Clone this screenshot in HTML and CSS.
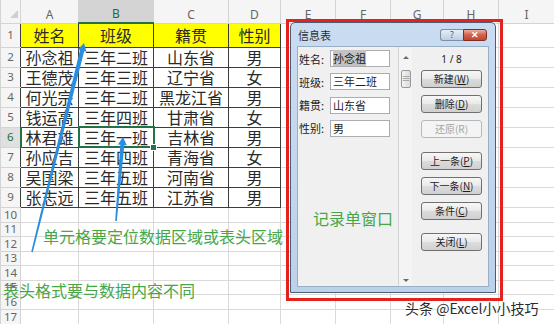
FILE: index.html
```html
<!DOCTYPE html>
<html lang="zh-CN">
<head>
    <meta charset="UTF-8">
    <meta name="viewport" content="width=device-width, initial-scale=1.0">
    <title>记录单</title>
    <link rel="stylesheet" href="styles.css">
</head>
<body>
<div id="tela">

    <!-- Planilha -->
    <table class="planilha">
        <colgroup>
            <col class="c-rh"><col class="c-a"><col class="c-b"><col class="c-c"><col class="c-d">
            <col class="c-e"><col class="c-f"><col class="c-g"><col class="c-h"><col class="c-i">
        </colgroup>
        <tr class="r-cab">
            <th class="canto"><span class="tri"></span></th>
            <th>A</th><th class="sel">B</th><th>C</th><th>D</th><th>E</th><th>F</th><th>G</th><th>H</th><th>I</th>
        </tr>
        <tr class="r-tit">
            <th class="rh">1</th>
            <td class="d amarelo">姓名</td><td class="d amarelo">班级</td><td class="d amarelo">籍贯</td><td class="d amarelo">性别</td>
            <td></td><td></td><td></td><td></td><td></td>
        </tr>
        <tr class="r-dado">
            <th class="rh">2</th>
            <td class="d">孙念祖</td><td class="d">三年二班</td><td class="d">山东省</td><td class="d">男</td>
            <td></td><td></td><td></td><td></td><td></td>
        </tr>
        <tr class="r-dado">
            <th class="rh">3</th>
            <td class="d">王德茂</td><td class="d">三年三班</td><td class="d">辽宁省</td><td class="d">女</td>
            <td></td><td></td><td></td><td></td><td></td>
        </tr>
        <tr class="r-dado">
            <th class="rh">4</th>
            <td class="d">何光宗</td><td class="d">三年二班</td><td class="d">黑龙江省</td><td class="d">男</td>
            <td></td><td></td><td></td><td></td><td></td>
        </tr>
        <tr class="r-dado">
            <th class="rh">5</th>
            <td class="d">钱运高</td><td class="d">三年四班</td><td class="d">甘肃省</td><td class="d">女</td>
            <td></td><td></td><td></td><td></td><td></td>
        </tr>
        <tr class="r-dado">
            <th class="rh sel">6</th>
            <td class="d">林君雄</td><td class="d ativa">三年一班</td><td class="d">吉林省</td><td class="d">男</td>
            <td></td><td></td><td></td><td></td><td></td>
        </tr>
        <tr class="r-dado">
            <th class="rh">7</th>
            <td class="d">孙应吉</td><td class="d">三年四班</td><td class="d">青海省</td><td class="d">女</td>
            <td></td><td></td><td></td><td></td><td></td>
        </tr>
        <tr class="r-dado">
            <th class="rh">8</th>
            <td class="d">吴国梁</td><td class="d">三年五班</td><td class="d">河南省</td><td class="d">男</td>
            <td></td><td></td><td></td><td></td><td></td>
        </tr>
        <tr class="r-dado">
            <th class="rh">9</th>
            <td class="d">张志远</td><td class="d">三年五班</td><td class="d">江苏省</td><td class="d">男</td>
            <td></td><td></td><td></td><td></td><td></td>
        </tr>
        <tr class="r-vazia"><th class="rh">10</th><td></td><td></td><td></td><td></td><td></td><td></td><td></td><td></td><td></td></tr>
        <tr class="r-vazia2"><th class="rh">11</th><td></td><td></td><td></td><td></td><td></td><td></td><td></td><td></td><td></td></tr>
        <tr class="r-vazia"><th class="rh">12</th><td></td><td></td><td></td><td></td><td></td><td></td><td></td><td></td><td></td></tr>
        <tr class="r-vazia2"><th class="rh">13</th><td></td><td></td><td></td><td></td><td></td><td></td><td></td><td></td><td></td></tr>
        <tr class="r-vazia"><th class="rh">14</th><td></td><td></td><td></td><td></td><td></td><td></td><td></td><td></td><td></td></tr>
        <tr class="r-vazia2"><th class="rh">15</th><td></td><td></td><td></td><td></td><td></td><td></td><td></td><td></td><td></td></tr>
        <tr class="r-vazia"><th class="rh">16</th><td></td><td></td><td></td><td></td><td></td><td></td><td></td><td></td><td></td></tr>
        <tr class="r-vazia"><th class="rh">17</th><td></td><td></td><td></td><td></td><td></td><td></td><td></td><td></td><td></td></tr>
    </table>

    <!-- alça de preenchimento da célula ativa -->
    <span class="alca"></span>

    <!-- Setas -->
    <svg class="setas" width="554" height="324" viewBox="0 0 554 324">
        <polygon points="84,43 86.44,51.85 84.20,51.29 32.78,252.19 31.22,251.81 79.94,50.23 77.70,49.67"/>
        <polygon points="123,137 126.82,145.34 124.33,145.14 116.80,221.07 115.20,220.93 120.35,144.80 117.86,144.60"/>
    </svg>

    <div class="nota nota-celula">单元格要定位数据区域或表头区域</div>
    <div class="nota nota-cab">表头格式要与数据内容不同</div>

    <!-- Janela do formulário -->
    <div class="janela">
        <div class="barra">
            <span class="titulo">信息表</span>
            <span class="bt-ajuda">?</span>
            <span class="bt-fechar">✕</span>
        </div>
        <div class="cliente">
            <div class="campos">
                <div class="campo"><label>姓名:</label><span class="caixa"><span class="selecao">孙念祖</span></span></div>
                <div class="campo"><label>班级:</label><span class="caixa">三年二班</span></div>
                <div class="campo"><label>籍贯:</label><span class="caixa">山东省</span></div>
                <div class="campo"><label>性别:</label><span class="caixa">男</span></div>
            </div>
            <div class="rolagem">
                <span class="seta-cima"></span>
                <span class="polegar">≡</span>
                <span class="seta-baixo"></span>
            </div>
            <div class="acoes">
                <div class="contador">1 / 8</div>
                <button>新建(<u>W</u>)</button>
                <button>删除(<u>D</u>)</button>
                <button class="inativo">还原(R)</button>
                <button class="grupo">上一条(<u>P</u>)</button>
                <button>下一条(<u>N</u>)</button>
                <button>条件(<u>C</u>)</button>
                <button class="grupo2">关闭(<u>L</u>)</button>
            </div>
        </div>
    </div>

    <div class="nota nota-janela">记录单窗口</div>
    <div class="moldura"></div>

    <div class="marca">头条 @Excel小小技巧</div>
</div>
</body>
</html>
```

FILE: styles.css
```css
body{margin:0;background:#fff;font-family:"Noto Sans CJK SC",sans-serif;}
#tela{position:relative;width:554px;height:324px;overflow:hidden;background:#fff;}

/* planilha */
.planilha{border-collapse:collapse;table-layout:fixed;width:554px;}
.c-rh{width:20px;} .c-a{width:58px;} .c-b{width:75px;} .c-c{width:75px;} .c-d{width:52px;}
.c-e{width:55px;} .c-f{width:55px;} .c-g{width:53px;} .c-h{width:55px;} .c-i{width:56px;}
.r-cab{height:23px;}
.r-tit{height:24px;}
.r-dado{height:20px;}
.r-vazia{height:15px;}
.r-vazia2{height:14px;}
td{border:1px solid #dadada;padding:0;font-size:16px;line-height:18px;text-align:center;color:#2a2a2a;white-space:nowrap;}
td.d{border-color:#3c3c3c;}
td.amarelo{background:#ffff00;}
td.ativa{border:2px solid #217346;}
th{padding:0;font-family:"Noto Sans",sans-serif;font-weight:normal;font-size:12px;color:#666;background:#f5f5f5;border:1px solid #d4d4d4;line-height:1;}
.r-cab th{vertical-align:bottom;padding-bottom:2px;border-top:none;}
.r-cab th.sel{background:#d4d4d4;color:#1f6b40;border-bottom:2px solid #217346;}
th.rh{border-right:none;font-size:11.5px;}
.r-vazia th.rh,.r-vazia2 th.rh{border-right:1px solid #d4d4d4;}
th.rh.sel{background:#e0e0e0;color:#1f6b40;border-right:2px solid #217346;}
th.canto{text-align:right;padding:0 2px 3px 0;}
.tri{display:inline-block;width:0;height:0;border-left:8px solid transparent;border-bottom:8px solid #cfcfcf;}
.alca{position:absolute;left:150px;top:144px;width:5px;height:5px;background:#217346;border:1px solid #fff;}

/* anotações */
.setas{position:absolute;left:0;top:0;}
.setas polygon{fill:#2a8de0;}
.nota{position:absolute;color:#45a845;font-size:16px;line-height:20px;white-space:nowrap;}
.nota-celula{left:43px;top:226px;}
.nota-cab{left:3px;top:280px;}
.nota-janela{left:313px;top:208px;}
.moldura{position:absolute;left:286px;top:19px;width:217px;height:282px;box-sizing:border-box;border:3px solid #e4211d;}
.marca{position:absolute;left:405px;top:298px;font-size:14px;line-height:20px;color:#2b2b2b;white-space:nowrap;
    text-shadow:0 0 2px #fff,0 0 2px #fff,0 0 3px #fff;}

/* janela */
.janela{position:absolute;left:290px;top:22px;width:206px;height:271px;box-sizing:border-box;border:1px solid #4b5d73;border-radius:5px 5px 0 0;
    background:linear-gradient(#cadcf1,#bcd1ea);display:flex;flex-direction:column;}
.barra{height:23px;display:flex;align-items:center;padding:0 8px 0 7px;}
.titulo{flex:1;font-size:11px;color:#2d2d2d;}
.bt-ajuda,.bt-fechar{height:12px;display:flex;align-items:center;justify-content:center;font-size:9px;box-sizing:border-box;}
.bt-ajuda{width:23px;border:1px solid #7d8ea5;border-right:none;border-radius:3px 0 0 3px;background:linear-gradient(#e5eef8,#bccde2);color:#4b5a6c;}
.bt-fechar{width:24px;border:1px solid #7e2f22;border-radius:0 3px 3px 0;background:linear-gradient(#eab0a3,#d0614c 50%,#c24730);color:#fff;font-weight:bold;}
.cliente{flex:1;margin:0 6px 5px 6px;background:#f0f0f0;border:1px solid #9aaec6;display:flex;}

.campos{width:100px;padding-top:3px;display:flex;flex-direction:column;gap:6.3px;}
.campo{height:17px;display:flex;align-items:center;}
.campo label{width:31px;padding-left:1px;font-size:11px;color:#222;}
.caixa{width:60px;height:17px;box-sizing:border-box;border:1px solid #abadb3;background:#fff;font-size:11px;line-height:15px;padding-left:2px;color:#222;}
.selecao{background:#c3c3c3;}

.rolagem{width:13px;border-left:1px solid #d2d2d2;background:#f4f4f4;display:flex;flex-direction:column;align-items:center;padding-top:9px;}
.seta-cima{width:0;height:0;border-left:3px solid transparent;border-right:3px solid transparent;border-bottom:3px solid #6a6a6a;}
.polegar{margin-top:11px;width:10px;height:18px;box-sizing:border-box;border:1px solid #979797;border-radius:2px;background:linear-gradient(90deg,#f3f3f3,#dcdcdc);
    font-size:9px;line-height:16px;text-align:center;color:#777;}
.seta-baixo{margin-top:auto;margin-bottom:4px;width:0;height:0;border-left:3px solid transparent;border-right:3px solid transparent;border-top:3px solid #6a6a6a;}

.acoes{flex:1;display:flex;flex-direction:column;align-items:flex-start;padding-left:9px;gap:7px;}
.contador{width:61px;text-align:center;font-family:"Noto Sans",sans-serif;font-size:10px;line-height:14px;padding-top:5px;margin-bottom:-3px;color:#222;}
.acoes button{width:61px;height:18px;padding:0;border:1px solid #707070;border-radius:3px;
    background:linear-gradient(#f7f7f7,#e9e9e9 50%,#dcdcdc 50%,#d0d0d0);font-family:"Noto Sans CJK SC",sans-serif;font-size:10px;color:#1e1e1e;line-height:16px;}
.acoes button.inativo{border-color:#b5b9bc;background:#f4f4f4;color:#a3a3a3;}
.acoes button.grupo{margin-top:7px;}
.acoes button.grupo2{margin-top:6px;}
```
